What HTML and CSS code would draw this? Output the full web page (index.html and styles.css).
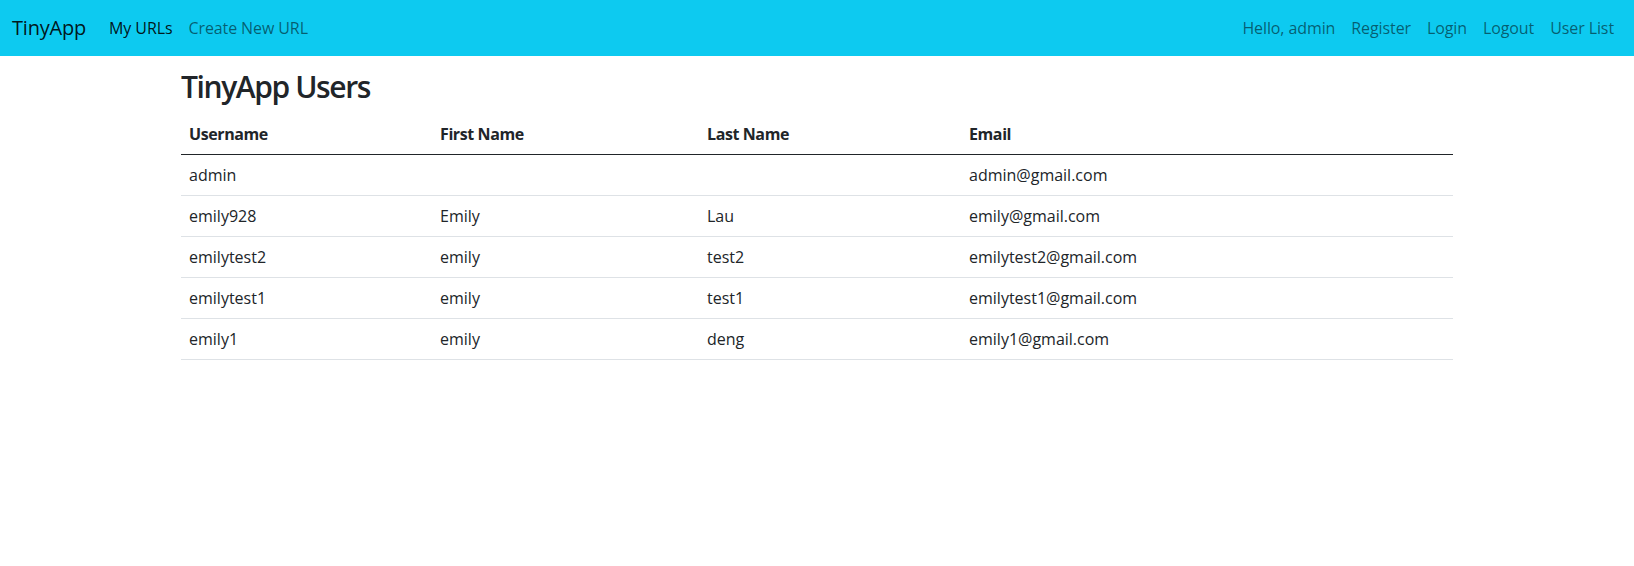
FILE: index.html
```html
<!DOCTYPE html>
<html lang="en">
<head>
<meta charset="utf-8">
<title>TinyApp Users</title>
<link rel="stylesheet" href="styles.css">
</head>
<body>
<nav class="navbar">
  <a class="brand" href="#">TinyApp</a>
  <div class="nav-left">
    <a class="nav-link active" href="#">My URLs</a>
    <a class="nav-link" href="#">Create New URL</a>
  </div>
  <div class="nav-right">
    <span class="nav-link">Hello, admin</span>
    <a class="nav-link" href="#">Register</a>
    <a class="nav-link" href="#">Login</a>
    <a class="nav-link" href="#">Logout</a>
    <a class="nav-link" href="#">User List</a>
  </div>
</nav>
<main class="container">
  <h2 class="title">TinyApp Users</h2>
  <table class="users">
    <colgroup>
      <col class="c-user">
      <col class="c-first">
      <col class="c-last">
      <col class="c-email">
    </colgroup>
    <thead>
      <tr><th>Username</th><th>First Name</th><th>Last Name</th><th>Email</th></tr>
    </thead>
    <tbody>
      <tr><td>admin</td><td></td><td></td><td>admin@gmail.com</td></tr>
      <tr><td>emily928</td><td>Emily</td><td>Lau</td><td>emily@gmail.com</td></tr>
      <tr><td>emilytest2</td><td>emily</td><td>test2</td><td>emilytest2@gmail.com</td></tr>
      <tr><td>emilytest1</td><td>emily</td><td>test1</td><td>emilytest1@gmail.com</td></tr>
      <tr><td>emily1</td><td>emily</td><td>deng</td><td>emily1@gmail.com</td></tr>
    </tbody>
  </table>
</main>
</body>
</html>
```
FILE: styles.css
```css
* { box-sizing: border-box; }
body {
  margin: 0;
  font-family: "Open Sans", "Noto Sans", sans-serif;
  font-size: 16px;
  line-height: 24px;
  color: #212529;
  background: #fff;
}
a { text-decoration: none; }
.navbar {
  display: flex;
  align-items: center;
  height: 56px;
  padding: 0 12px;
  background: #0dcaf0;
}
.brand {
  font-size: 20px;
  line-height: 30px;
  letter-spacing: -0.2px;
  color: rgba(0,0,0,.9);
  margin-right: 15px;
}
.nav-left, .nav-right { display: flex; }
.nav-right { margin-left: auto; }
.nav-link {
  padding: 8px;
  letter-spacing: -0.1px;
  color: rgba(0,0,0,.55);
}
.nav-link.active { color: rgba(0,0,0,.9); }
.container {
  width: 1272px;
  margin: 0 auto;
  padding-top: 12px;
}
.title {
  margin: 0 0 8px;
  font-size: 30px;
  font-weight: 600;
  letter-spacing: -1.4px;
  line-height: 38.4px;
}
.users {
  width: 100%;
  border-collapse: collapse;
}
.c-user { width: 251px; }
.c-first { width: 267px; }
.c-last { width: 262px; }
.users th, .users td {
  text-align: left;
  padding: 8px;
  border-bottom: 1px solid #dee2e6;
}
.users th {
  font-weight: 700;
  letter-spacing: -0.4px;
  border-bottom-color: #212529;
}
```
